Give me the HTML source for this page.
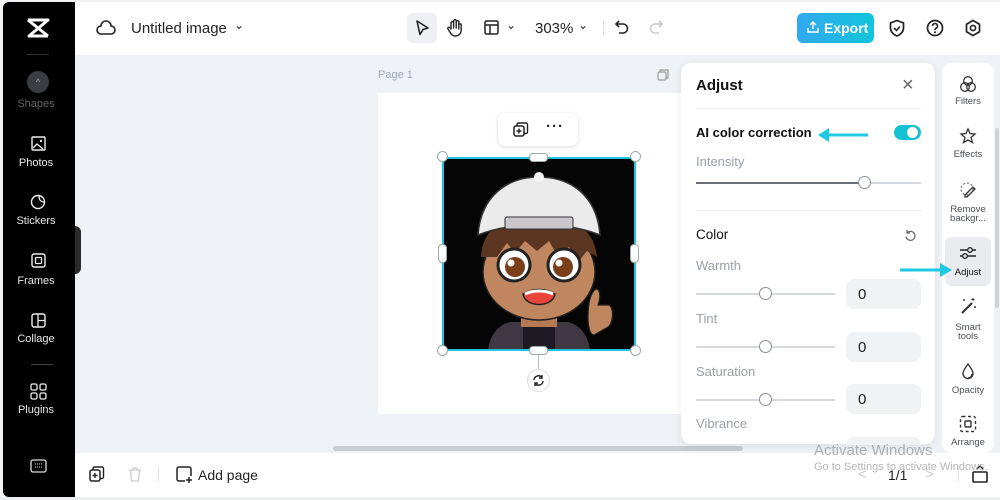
<!DOCTYPE html>
<html><head><meta charset="utf-8"><style>
*{box-sizing:border-box;margin:0;padding:0}
body{width:1000px;height:500px;overflow:hidden;background:#f1f2f4;font-family:"Liberation Sans",sans-serif;position:relative;color:#1f2329}
.a{position:absolute}
.side{left:3px;top:2px;width:72px;height:495px;background:#000;border-radius:6px 0 0 6px}
.si{position:absolute;left:0;width:72px;text-align:center;color:#e8e8e8;font-size:11px}
.top{left:75px;top:2px;width:925px;height:53px;background:#fff}
.canvas{left:75px;top:55px;width:925px;height:398px;background:#eef1f5}
.bottom{left:75px;top:453px;width:925px;height:44px;background:#fff}
.lbl{font-size:14px;color:#9aa0a6}
.slider{position:absolute;height:2px;background:#d5d8dc}
.knob{position:absolute;width:13px;height:13px;border:1px solid #8a8f96;border-radius:50%;background:#fff}
.box{position:absolute;left:846px;width:75px;height:30px;background:#f1f2f4;border-radius:8px;font-size:15px;padding:7px 0 0 12px;color:#222}
.ri{position:absolute;left:945px;width:46px;text-align:center;font-size:9.5px;color:#4a4f55;line-height:9px}
.h{position:absolute;width:11px;height:11px;border:1px solid #9aa;border-radius:50%;background:#fff}
.hs{position:absolute;background:#fff;border:1px solid #9aa;border-radius:4px}
</style></head><body>
<div class="a top"></div>
<div class="a canvas"></div>
<div class="a bottom"></div>
<div class="a side"></div>
<!-- logo -->
<svg class="a" style="left:26px;top:17px" width="24" height="22" viewBox="0 0 24 22"><path d="M2 3h20L3 19h19M2 3l20 16M22 3L3 19" stroke="#fff" stroke-width="3" fill="none" stroke-linejoin="round"/></svg>
<div class="a" style="left:27px;top:54px;width:22px;height:1px;background:#333"></div>
<div class="a" style="left:27px;top:71px;width:22px;height:22px;border-radius:50%;background:#3a3d42;color:#aaa;font-size:9px;text-align:center;line-height:22px">^</div>
<div class="si" style="top:98px;color:#666">Shapes</div>
<svg class="a" style="left:31px;top:136px" width="15" height="15"><rect x="1" y="1" width="13" height="13" rx="1" stroke="#eee" stroke-width="1.4" fill="none"/><path d="M2 12l4-4 6 5" stroke="#eee" stroke-width="1.3" fill="none"/><circle cx="10" cy="5" r="1.2" fill="#eee"/></svg>
<div class="si" style="top:157px">Photos</div>
<svg class="a" style="left:30px;top:194px" width="16" height="16"><circle cx="8" cy="8" r="6.5" stroke="#eee" stroke-width="1.4" fill="none"/><path d="M9 2c0 4 2 6 5 6" stroke="#eee" stroke-width="1.3" fill="none"/></svg>
<div class="si" style="top:215px">Stickers</div>
<svg class="a" style="left:31px;top:253px" width="15" height="15"><rect x="1" y="1" width="13" height="13" rx="2" stroke="#eee" stroke-width="1.4" fill="none"/><rect x="4.5" y="4.5" width="6" height="6" rx="1" stroke="#eee" stroke-width="1.3" fill="none"/></svg>
<div class="si" style="top:275px">Frames</div>
<svg class="a" style="left:31px;top:313px" width="15" height="15"><rect x="1" y="1" width="13" height="13" rx="2" stroke="#eee" stroke-width="1.4" fill="none"/><path d="M7 1v13M7 7.5h7" stroke="#eee" stroke-width="1.3"/></svg>
<div class="si" style="top:333px">Collage</div>
<div class="a" style="left:31px;top:364px;width:22px;height:1px;background:#444"></div>
<svg class="a" style="left:30px;top:383px" width="17" height="17"><rect x="1" y="1" width="6" height="6" rx="1.5" stroke="#eee" stroke-width="1.3" fill="none"/><rect x="10" y="1" width="6" height="6" rx="1.5" stroke="#eee" stroke-width="1.3" fill="none"/><rect x="1" y="10" width="6" height="6" rx="1.5" stroke="#eee" stroke-width="1.3" fill="none"/><rect x="10" y="10" width="6" height="6" rx="1.5" stroke="#eee" stroke-width="1.3" fill="none"/></svg>
<div class="si" style="top:404px">Plugins</div>
<svg class="a" style="left:30px;top:459px" width="17" height="14"><rect x="1" y="1" width="15" height="12" rx="2" stroke="#ddd" stroke-width="1.3" fill="none"/><path d="M5 5h7M5 8h7" stroke="#ddd" stroke-width="1" stroke-dasharray="1 1"/></svg>
<div class="a" style="left:75px;top:226px;width:6px;height:48px;background:#2a2a2a;border-radius:0 6px 6px 0"></div>
<!-- top bar -->
<svg class="a" style="left:96px;top:19px" width="20" height="18"><path d="M5 15a4 4 0 0 1 0-8 5 5 0 0 1 10 0 4 4 0 0 1 0 8z" stroke="#222" stroke-width="1.6" fill="none"/></svg>
<div class="a" style="left:131px;top:20px;font-size:15px;color:#222">Untitled image</div>
<div class="a" style="left:234px;top:18px;font-size:12px;color:#222">&#8964;</div>
<div class="a" style="left:407px;top:13px;width:30px;height:30px;background:#eef0f3;border-radius:6px"></div>
<svg class="a" style="left:414px;top:19px" width="16" height="18"><path d="M3 2l11 7-5 1.5-3 5z" stroke="#222" stroke-width="1.6" fill="none" stroke-linejoin="round"/></svg>
<svg class="a" style="left:446px;top:18px" width="18" height="20"><path d="M5 11V5a1.3 1.3 0 0 1 2.6 0v5V3a1.3 1.3 0 0 1 2.6 0v7V4a1.3 1.3 0 0 1 2.6 0v7V7a1.2 1.2 0 0 1 2.4 0v5c0 4-3 6-6 6-3 0-4-2-6-5l-1.5-2.5a1.2 1.2 0 0 1 2-1z" stroke="#222" stroke-width="1.4" fill="none" stroke-linejoin="round"/></svg>
<svg class="a" style="left:484px;top:20px" width="15" height="15"><rect x="1" y="1" width="13" height="13" rx="1.5" stroke="#222" stroke-width="1.5" fill="none"/><path d="M1 5h13M6 5v9" stroke="#222" stroke-width="1.5"/></svg>
<div class="a" style="left:506px;top:18px;font-size:12px">&#8964;</div>
<div class="a" style="left:535px;top:20px;font-size:15px;color:#222">303%</div>
<div class="a" style="left:578px;top:18px;font-size:12px">&#8964;</div>
<div class="a" style="left:603px;top:21px;width:1px;height:14px;background:#ddd"></div>
<svg class="a" style="left:614px;top:19px" width="16" height="16"><path d="M5 2L2 5l3 3M2 5h7a4.5 4.5 0 0 1 0 9H5" stroke="#222" stroke-width="1.6" fill="none"/></svg>
<svg class="a" style="left:648px;top:19px" width="16" height="16"><path d="M11 2l3 3-3 3M14 5H7a4.5 4.5 0 0 0 0 9h4" stroke="#ccc" stroke-width="1.6" fill="none"/></svg>
<div class="a" style="left:797px;top:13px;width:77px;height:30px;border-radius:6px;background:linear-gradient(90deg,#32a8f0,#12c5dc);color:#fff;font-size:14px;font-weight:bold;padding:7px 0 0 27px">Export</div>
<svg class="a" style="left:806px;top:20px" width="14" height="14"><path d="M4 5l3-3 3 3M7 2v7M2 8v4h10V8" stroke="#fff" stroke-width="1.4" fill="none"/></svg>
<svg class="a" style="left:888px;top:19px" width="18" height="18"><path d="M9 1.5l6.5 2.5v5c0 4-3 6.5-6.5 8-3.5-1.5-6.5-4-6.5-8V4z" stroke="#222" stroke-width="1.7" fill="none"/><path d="M6 9l2.5 2.5L12 7.5" stroke="#222" stroke-width="1.6" fill="none"/></svg>
<svg class="a" style="left:926px;top:19px" width="18" height="18"><circle cx="9" cy="9" r="7.5" stroke="#222" stroke-width="1.7" fill="none"/><path d="M6.5 7a2.5 2.5 0 1 1 3.5 2.3c-.8.4-1 .9-1 1.7" stroke="#222" stroke-width="1.6" fill="none"/><circle cx="9" cy="13.3" r="1" fill="#222"/></svg>
<svg class="a" style="left:964px;top:19px" width="18" height="18"><path d="M9 1.5l6.5 3.75v7.5L9 16.5l-6.5-3.75v-7.5z" stroke="#222" stroke-width="1.7" fill="none"/><circle cx="9" cy="9" r="2.6" stroke="#222" stroke-width="1.6" fill="none"/></svg>
<!-- canvas page -->
<div class="a" style="left:378px;top:69px;font-size:11px;color:#a4a9b0">Page 1</div>
<svg class="a" style="left:657px;top:69px" width="12" height="12"><rect x="1" y="3" width="8" height="8" rx="1.5" stroke="#999" stroke-width="1.2" fill="none"/><path d="M3 3V1h8v8H9" stroke="#999" stroke-width="1.2" fill="none"/></svg>
<div class="a" style="left:378px;top:93px;width:303px;height:321px;background:#fff"></div>
<div class="a" style="left:498px;top:113px;width:80px;height:33px;background:#fff;border-radius:7px;box-shadow:0 1px 4px rgba(0,0,0,.15)"></div>
<svg class="a" style="left:513px;top:122px" width="16" height="16"><rect x="1" y="4" width="10" height="10" rx="2" stroke="#222" stroke-width="1.5" fill="none"/><path d="M4 4V2.5A1.5 1.5 0 0 1 5.5 1H13a1.5 1.5 0 0 1 1.5 1.5V10A1.5 1.5 0 0 1 13 11.5h-2M6 6.5v5M3.5 9h5" stroke="#222" stroke-width="1.4" fill="none"/></svg>
<div class="a" style="left:546px;top:118px;font-size:15px;font-weight:bold;letter-spacing:1px">···</div>
<!-- image -->
<svg class="a" style="left:443px;top:157px" width="192" height="193" viewBox="0 0 192 193">
<rect width="192" height="193" fill="#050505"/>
<path d="M45 193c2-15 10-25 22-28h58c12 3 20 13 22 28z" fill="#3f3742"/>
<path d="M80 170h32v23H80z" fill="#1e1a22"/>
<path d="M78 150h36v20H78z" fill="#b57a52"/>
<path d="M145 160c0-15 3-25 8-28 4 0 5 8 2 16h10c6 0 6 18 0 22l-14 8c-4 0-6-8-6-18z" fill="#c08660" stroke="#222" stroke-width="1.2"/>
<ellipse cx="96" cy="115" rx="56" ry="48" fill="#c08660" stroke="#222" stroke-width="1.5"/>
<path d="M38 100c2-30 20-38 58-40 38 2 55 12 58 40l-10-6-8 10-10-14-12 8-8-14-12 10-12-10-10 12-8-10-10 14z" fill="#5b3621"/>
<path d="M35 78c3-40 30-58 61-58s58 18 61 58c-20-8-40-10-61-10s-41 2-61 10z" fill="#ecebec" stroke="#333" stroke-width="1.5"/>
<rect x="62" y="60" width="68" height="12" rx="2" fill="#c9c6cc" stroke="#333"/>
<circle cx="96" cy="20" r="5" fill="#f4f4f4"/>
<circle cx="71" cy="108" r="16" fill="#fff" stroke="#222" stroke-width="3"/><circle cx="72" cy="110" r="10" fill="#7a3f18"/><circle cx="68" cy="106" r="3.5" fill="#fff"/>
<circle cx="121" cy="108" r="16" fill="#fff" stroke="#222" stroke-width="3"/><circle cx="120" cy="110" r="10" fill="#7a3f18"/><circle cx="116" cy="106" r="3.5" fill="#fff"/>
<path d="M80 137c10-6 22-6 32 0-2 14-30 14-32 0z" fill="#e8443a" stroke="#222" stroke-width="1.5"/>
<path d="M82 137c8-4 20-4 28 0" stroke="#fff" stroke-width="3" fill="none"/>
</svg>
<div class="a" style="left:442px;top:157px;width:194px;height:194px;border:2px solid #20c4de"></div>
<div class="h" style="left:437px;top:151px"></div><div class="h" style="left:630px;top:151px"></div>
<div class="h" style="left:437px;top:345px"></div><div class="h" style="left:630px;top:345px"></div>
<div class="hs" style="left:529px;top:153px;width:19px;height:9px"></div>
<div class="hs" style="left:529px;top:346px;width:19px;height:9px"></div>
<div class="hs" style="left:438px;top:244px;width:9px;height:19px"></div>
<div class="hs" style="left:630px;top:244px;width:9px;height:19px"></div>
<div class="a" style="left:538px;top:355px;width:1px;height:14px;background:#bbb"></div>
<div class="a" style="left:527px;top:369px;width:23px;height:23px;border-radius:50%;background:#fff;border:1px solid #ddd"></div>
<svg class="a" style="left:532px;top:374px" width="13" height="13"><path d="M2 6a4.5 4.5 0 0 1 8-2.5M11 7a4.5 4.5 0 0 1-8 2.5M10 1v3H7M3 12V9h3" stroke="#222" stroke-width="1.4" fill="none"/></svg>
<!-- scrollbars -->
<div class="a" style="left:333px;top:446px;width:410px;height:5px;background:#c9ccd0;border-radius:3px"></div>
<div class="a" style="left:995px;top:128px;width:4px;height:180px;background:#cfd2d6;border-radius:2px"></div>
<!-- adjust panel -->
<div class="a" style="left:681px;top:63px;width:254px;height:381px;background:#fff;border-radius:10px;box-shadow:0 2px 8px rgba(0,0,0,.08)"></div>
<div class="a" style="left:696px;top:77px;font-size:15px;font-weight:bold;color:#111">Adjust</div>
<div class="a" style="left:902px;top:74px;font-size:20px;color:#666">×</div>
<div class="a" style="left:696px;top:108px;width:225px;height:1px;background:#eee"></div>
<div class="a" style="left:696px;top:125px;font-size:13px;font-weight:bold;color:#111">AI color correction</div>
<svg class="a" style="left:816px;top:127px" width="54" height="16"><path d="M52 8H12" stroke="#1fc8e3" stroke-width="3"/><path d="M2 8l11-7v14z" fill="#1fc8e3"/></svg>
<div class="a" style="left:894px;top:125px;width:27px;height:15px;border-radius:8px;background:#13c1d5"></div>
<div class="a" style="left:907px;top:127px;width:11px;height:11px;border-radius:50%;background:#fff"></div>
<div class="a lbl" style="left:696px;top:154px;font-size:13px">Intensity</div>
<div class="slider" style="left:696px;top:182px;width:225px"></div>
<div class="slider" style="left:696px;top:182px;width:168px;background:#6b7078"></div>
<div class="knob" style="left:858px;top:176px"></div>
<div class="a" style="left:696px;top:210px;width:225px;height:1px;background:#eee"></div>
<div class="a" style="left:696px;top:227px;font-size:13.5px;color:#111">Color</div>
<svg class="a" style="left:904px;top:229px" width="13" height="13"><path d="M3 4a4.5 4.5 0 1 1-1 3.5M3 1v3h3" stroke="#666" stroke-width="1.2" fill="none"/></svg>
<div class="a lbl" style="left:696px;top:258px;font-size:13px">Warmth</div>
<div class="slider" style="left:696px;top:293px;width:139px"></div><div class="knob" style="left:759px;top:287px"></div>
<div class="box" style="top:279px">0</div>
<div class="a lbl" style="left:696px;top:311px;font-size:13px">Tint</div>
<div class="slider" style="left:696px;top:346px;width:139px"></div><div class="knob" style="left:759px;top:340px"></div>
<div class="box" style="top:332px">0</div>
<div class="a lbl" style="left:696px;top:364px;font-size:13px">Saturation</div>
<div class="slider" style="left:696px;top:399px;width:139px"></div><div class="knob" style="left:759px;top:393px"></div>
<div class="box" style="top:384px">0</div>
<div class="a lbl" style="left:696px;top:416px;font-size:13px">Vibrance</div>
<div class="a" style="left:846px;top:437px;width:75px;height:8px;background:#f1f2f4;border-radius:8px 8px 0 0"></div>
<!-- right rail -->
<div class="a" style="left:942px;top:63px;width:52px;height:390px;background:#fff;border-radius:10px"></div>
<svg class="a" style="left:959px;top:75px" width="18" height="18"><circle cx="9" cy="6" r="4.3" stroke="#333" stroke-width="1.3" fill="none"/><circle cx="6" cy="12" r="4.3" stroke="#333" stroke-width="1.3" fill="none"/><circle cx="12" cy="12" r="4.3" stroke="#333" stroke-width="1.3" fill="none"/></svg>
<div class="ri" style="top:97px">Filters</div>
<svg class="a" style="left:959px;top:127px" width="18" height="18"><path d="M9 2l2 4.5 5 .5-4 3.5 1.5 5L9 13l-4.5 2.5 1.5-5-4-3.5 5-.5z" stroke="#333" stroke-width="1.3" fill="none"/></svg>
<div class="ri" style="top:150px">Effects</div>
<svg class="a" style="left:959px;top:181px" width="18" height="18"><path d="M6 14l8-8 2 2-8 8H6z" stroke="#333" stroke-width="1.3" fill="none"/><circle cx="8" cy="8" r="6" stroke="#555" stroke-width="1" stroke-dasharray="2 2" fill="none"/></svg>
<div class="ri" style="top:205px">Remove backgr...</div>
<div class="a" style="left:945px;top:237px;width:46px;height:49px;background:#e9ebee;border-radius:7px"></div>
<svg class="a" style="left:959px;top:245px" width="18" height="16"><path d="M1 5h16M1 11h16" stroke="#222" stroke-width="1.4"/><circle cx="11" cy="5" r="2.3" fill="#e9ebee" stroke="#222" stroke-width="1.3"/><circle cx="6" cy="11" r="2.3" fill="#e9ebee" stroke="#222" stroke-width="1.3"/></svg>
<div class="ri" style="top:268px;color:#111">Adjust</div>
<svg class="a" style="left:900px;top:262px" width="54" height="16"><path d="M0 8h40" stroke="#1fc8e3" stroke-width="3"/><path d="M52 8l-12-7v14z" fill="#1fc8e3"/></svg>
<svg class="a" style="left:959px;top:297px" width="18" height="18"><path d="M3 16L13 6" stroke="#333" stroke-width="2"/><path d="M14 1v3M12.5 2.5h3M5 2v2M4 3h2M16 9v2M15 10h2" stroke="#333" stroke-width="1"/></svg>
<div class="ri" style="top:323px">Smart tools</div>
<svg class="a" style="left:960px;top:362px" width="16" height="18"><path d="M8 2c3 4 5 7 5 9.5a5 5 0 0 1-10 0C3 9 5 6 8 2z" stroke="#333" stroke-width="1.4" fill="none"/><path d="M8 16a4 4 0 0 0 4-4" stroke="#333" stroke-width="1.4" fill="none"/></svg>
<div class="ri" style="top:386px">Opacity</div>
<svg class="a" style="left:959px;top:415px" width="18" height="18"><rect x="1.5" y="1.5" width="15" height="15" rx="2" stroke="#333" stroke-width="1.4" stroke-dasharray="3 2.5" fill="none"/><rect x="6" y="6" width="6" height="6" rx="1" stroke="#333" stroke-width="1.4" fill="none"/></svg>
<div class="ri" style="top:438px">Arrange</div>
<!-- bottom bar -->
<svg class="a" style="left:89px;top:466px" width="16" height="17"><rect x="1" y="4" width="10" height="11" rx="2" stroke="#222" stroke-width="1.5" fill="none"/><path d="M4 4V2.5A1.5 1.5 0 0 1 5.5 1H13a1.5 1.5 0 0 1 1.5 1.5V11a1.5 1.5 0 0 1-1.5 1.5h-2M6 7v5M3.5 9.5h5" stroke="#222" stroke-width="1.4" fill="none"/></svg>
<svg class="a" style="left:128px;top:467px" width="14" height="15"><path d="M1 3h12M5 3V1h4v2M2.5 3l1 11h7l1-11" stroke="#ccc" stroke-width="1.3" fill="none"/></svg>
<div class="a" style="left:158px;top:466px;width:1px;height:16px;background:#e5e5e5"></div>
<svg class="a" style="left:176px;top:466px" width="17" height="17"><path d="M9 15H3a2 2 0 0 1-2-2V3a2 2 0 0 1 2-2h10a2 2 0 0 1 2 2v7M13 11v6M10 14h6" stroke="#222" stroke-width="1.5" fill="none"/></svg>
<div class="a" style="left:198px;top:467px;font-size:14px;color:#222">Add page</div>
<div class="a" style="left:858px;top:466px;font-size:15px;color:#ccc">&lt;</div>
<div class="a" style="left:888px;top:467px;font-size:14px;color:#222">1/1</div>
<div class="a" style="left:925px;top:466px;font-size:15px;color:#ccc">&gt;</div>
<div class="a" style="left:958px;top:466px;width:1px;height:16px;background:#e5e5e5"></div>
<svg class="a" style="left:972px;top:465px" width="16" height="18"><rect x="1" y="7" width="14" height="10" rx="1" stroke="#222" stroke-width="1.6" fill="none"/><path d="M5 4l3-3 3 3" stroke="#222" stroke-width="1.3" fill="none"/></svg>
<div class="a" style="left:814px;top:442px;font-size:15px;color:rgba(120,120,120,.55)">Activate Windows</div>
<div class="a" style="left:814px;top:461px;font-size:11px;color:rgba(120,120,120,.55)">Go to Settings to activate Windows.</div>
<div class="a" style="left:0;top:497px;width:1000px;height:3px;background:#eceef0"></div>
</body></html>
